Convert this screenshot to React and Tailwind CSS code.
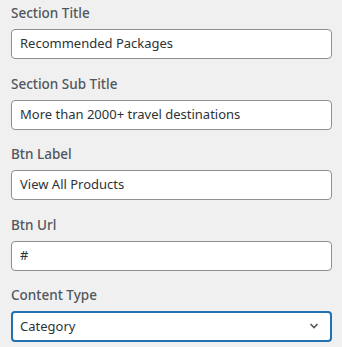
import React from "react";

const fields = [
  { label: "Section Title", value: "Recommended Packages" },
  { label: "Section Sub Title", value: "More than 2000+ travel destinations" },
  { label: "Btn Label", value: "View All Products" },
  { label: "Btn Url", value: "#" },
];

function Field({ label, children }) {
  return (
    <div className="mb-[15.5px]">
      <div className="h-[18px] leading-[18px] text-[13.5px] font-medium text-[#50575e] mb-[7px]">
        {label}
      </div>
      {children}
    </div>
  );
}

export default function App() {
  return (
    <div
      className="w-[342px] h-[347px] overflow-hidden bg-[#f0f0f0] pt-[4px] pl-[11px] pr-[10px]"
      style={{ fontFamily: '"Noto Sans", "Open Sans", sans-serif' }}
    >
      {fields.map((f) => (
        <Field key={f.label} label={f.label}>
          <div className="h-[30px] flex items-center bg-white border border-[#8c8f94] rounded-[4px] px-[8px] text-[13px] text-[#2c3338]">
            {f.value}
          </div>
        </Field>
      ))}
      <Field label="Content Type">
        <div className="h-[31px] flex items-center justify-between bg-white border-2 border-[#2271b1] rounded-[4px] pl-[7px] pr-[8px] text-[13px] text-[#2c3338]">
          <span>Category</span>
          <svg width="16" height="16" viewBox="0 0 16 16" fill="none" className="-mt-[1px]">
            <path d="M4.5 6 L8 9.5 L11.5 6" stroke="#50575e" strokeWidth="1.6" />
          </svg>
        </div>
      </Field>
    </div>
  );
}
